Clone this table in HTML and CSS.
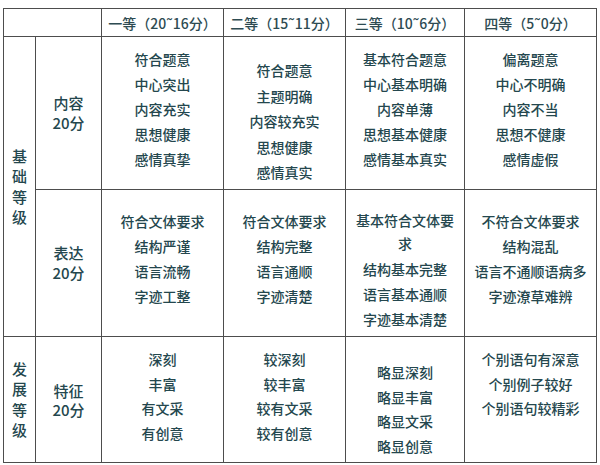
FILE: index.html
```html
<!DOCTYPE html>
<html lang="zh-CN">
<head>
<meta charset="utf-8">
<title>作文评分标准</title>
<link rel="stylesheet" href="styles.css">
</head>
<body>
<table class="rubric">
  <colgroup>
    <col class="c-group">
    <col class="c-item">
    <col class="c-g1">
    <col class="c-g2">
    <col class="c-g3">
    <col class="c-g4">
  </colgroup>
  <thead>
    <tr class="row-head">
      <th colspan="2"></th>
      <th>一等（20˜16分）</th>
      <th>二等（15˜11分）</th>
      <th>三等（10˜6分）</th>
      <th>四等（5˜0分）</th>
    </tr>
  </thead>
  <tbody>
    <tr class="row-content">
      <th rowspan="2" class="group">基<br>础<br>等<br>级</th>
      <th class="item">内容<br>20分</th>
      <td class="pad-a"><p>符合题意</p><p>中心突出</p><p>内容充实</p><p>思想健康</p><p>感情真挚</p></td>
      <td class="pad-b"><p>符合题意</p><p>主题明确</p><p>内容较充实</p><p>思想健康</p><p>感情真实</p></td>
      <td class="pad-a"><p>基本符合题意</p><p>中心基本明确</p><p>内容单薄</p><p>思想基本健康</p><p>感情基本真实</p></td>
      <td class="pad-a"><p>偏离题意</p><p>中心不明确</p><p>内容不当</p><p>思想不健康</p><p>感情虚假</p></td>
    </tr>
    <tr class="row-express">
      <th class="item">表达<br>20分</th>
      <td class="pad-c"><p>符合文体要求</p><p>结构严谨</p><p>语言流畅</p><p>字迹工整</p></td>
      <td class="pad-c"><p>符合文体要求</p><p>结构完整</p><p>语言通顺</p><p>字迹清楚</p></td>
      <td class="pad-c"><p class="wrap">基本符合文体要<br>求</p><p>结构基本完整</p><p>语言基本通顺</p><p>字迹基本清楚</p></td>
      <td class="pad-c"><p>不符合文体要求</p><p>结构混乱</p><p>语言不通顺语病多</p><p>字迹潦草难辨</p></td>
    </tr>
    <tr class="row-develop">
      <th class="group">发<br>展<br>等<br>级</th>
      <th class="item tight">特征<br>20分</th>
      <td class="pad-d"><p>深刻</p><p>丰富</p><p>有文采</p><p>有创意</p></td>
      <td class="pad-d"><p>较深刻</p><p>较丰富</p><p>较有文采</p><p>较有创意</p></td>
      <td class="pad-e"><p>略显深刻</p><p>略显丰富</p><p>略显文采</p><p>略显创意</p></td>
      <td class="pad-d"><p>个别语句有深意</p><p>个别例子较好</p><p>个别语句较精彩</p></td>
    </tr>
  </tbody>
</table>
</body>
</html>
```

FILE: styles.css
```css
html, body {
  margin: 0;
  padding: 0;
  background: #ffffff;
}

body {
  font-family: "Noto Sans CJK SC", "Noto Sans", sans-serif;
  color: #24474e;
}

.rubric {
  margin: 8px 0 0 3px;
  width: 594px;
  border-collapse: collapse;
  table-layout: fixed;
  font-size: 14px;
  font-weight: 500;
}

.c-group { width: 32px; }
.c-item { width: 66px; }
.c-g1 { width: 122px; }
.c-g2 { width: 122px; }
.c-g3 { width: 119px; }
.c-g4 { width: 132px; }

.rubric th,
.rubric td {
  border: 1px solid #4d4d4d;
  padding: 0;
  text-align: center;
  font-weight: 500;
}

.row-head { height: 28px; }
.rubric .row-head th {
  font-size: 14px;
  line-height: 20px;
  vertical-align: middle;
  white-space: nowrap;
  color: #2e4b52;
}

.row-content { height: 153px; }
.row-express { height: 147px; }
.row-develop { height: 126px; }

.rubric th.group {
  font-size: 15px;
  line-height: 20.5px;
  vertical-align: middle;
}

.rubric th.item {
  font-size: 15px;
  line-height: 20px;
  vertical-align: middle;
}

.rubric th.item.tight {
  line-height: 19px;
}

.rubric td {
  vertical-align: top;
  line-height: 25px;
  white-space: nowrap;
}

.rubric td p {
  margin: 0;
}

.rubric td.pad-a { padding-top: 10px; }
.rubric td.pad-b { padding-top: 21px; line-height: 25.5px; }
.rubric td.pad-c { padding-top: 19px; }
.rubric td.pad-d { padding-top: 10px; line-height: 24.5px; }
.rubric td.pad-e { padding-top: 23px; line-height: 24.5px; }

.rubric td p.wrap {
  line-height: 23px;
  margin-bottom: 2px;
}
```
